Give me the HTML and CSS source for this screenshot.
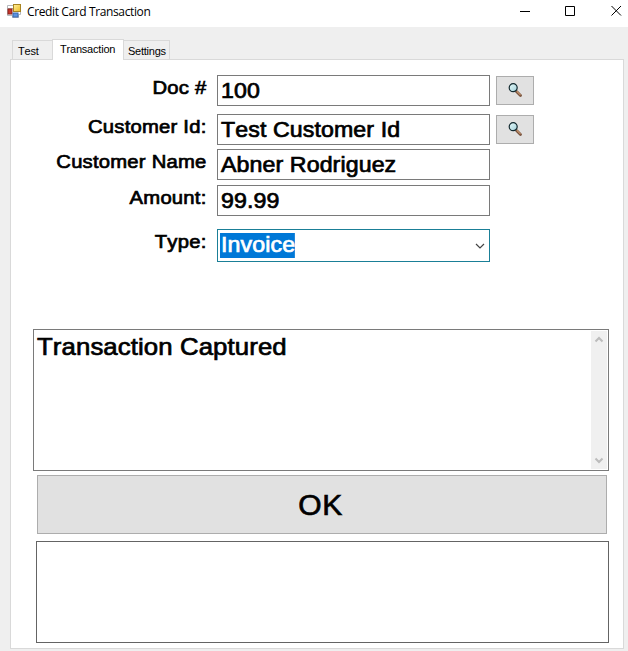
FILE: index.html
```html
<!DOCTYPE html>
<html lang="en">
<head>
<meta charset="utf-8">
<title>Credit Card Transaction</title>
<link rel="stylesheet" href="styles.css">
</head>
<body>
<svg width="0" height="0" class="defs">
  <defs>
    <linearGradient id="lens" x1="0" y1="0" x2="1" y2="1"><stop offset="0" stop-color="#e4fafa"/><stop offset="1" stop-color="#a3d0da"/></linearGradient>
    <linearGradient id="gold" x1="0" y1="0" x2="1" y2="1"><stop offset="0" stop-color="#fff0a0"/><stop offset="1" stop-color="#eebc20"/></linearGradient>
    <symbol id="magnifier" viewBox="0 0 16 16">
      <path d="M9.500 9.500l4 4" stroke="#76503a" stroke-width="2.800" stroke-linecap="round"/>
      <path d="M9.800 9.300l3.800 3.800" stroke="#c1906c" stroke-width="1.300"/>
      <circle cx="6.200" cy="5.700" r="4" fill="url(#lens)" stroke="#132a30" stroke-width="1.200"/>
    </symbol>
  </defs>
</svg>
<div class="window">
  <header class="titlebar">
    <svg class="app-icon" width="15" height="15" viewBox="0 0 15 15">
      <path d="M.5 1.500h6v3h-6zM.5 4.500v7h5v2h6v-3h2v-3" fill="#fff" stroke="#b5b9bd"/>
      <rect x="6.500" y=".5" width="7" height="7" fill="url(#gold)" stroke="#a88422"/>
      <rect x="1" y="5" width="4" height="5" fill="#c8352b" stroke="#8d241d"/>
      <rect x="6" y="9" width="5" height="4" fill="#5b93e0" stroke="#3d68ac"/>
    </svg>
    <h1 class="title">Credit Card Transaction</h1>
    <svg class="controls" width="102" height="12" viewBox="0 0 102 12" fill="none" stroke="#000">
      <path d="M0 6.500h10M45.500 1.500h9v9h-9zM91.500 1l9.500 9.500M101 1l-9.500 9.500"/>
    </svg>
  </header>
  <main class="client">
    <nav class="tabs">
      <span class="tab tab-test">Test</span>
      <span class="tab tab-active">Transaction</span>
      <span class="tab tab-settings">Settings</span>
    </nav>
    <section class="panel">
      <div class="form">
        <div class="row row-doc"><span class="label">Doc #</span><div class="field"><span class="value">100</span></div><div class="search"><svg width="16" height="16"><use href="#magnifier"/></svg></div></div>
        <div class="row row-id"><span class="label">Customer Id:</span><div class="field"><span class="value">Test Customer Id</span></div><div class="search"><svg width="16" height="16"><use href="#magnifier"/></svg></div></div>
        <div class="row row-name"><span class="label">Customer Name</span><div class="field"><span class="value">Abner Rodriguez</span></div></div>
        <div class="row row-amount"><span class="label">Amount:</span><div class="field"><span class="value">99.99</span></div></div>
        <div class="row row-type"><span class="label">Type:</span><div class="field combo"><span class="value selected">Invoice</span><svg width="10" height="6" viewBox="0 0 10 6" fill="none" stroke="#444" stroke-width="1.200"><path d="M1 1l4 4 4-4"/></svg></div></div>
      </div>
      <div class="log">
        <span class="message">Transaction Captured</span>
        <div class="scrollbar">
          <svg width="10" height="7" viewBox="0 0 10 7" fill="none" stroke="#bcbcbc" stroke-width="2"><path d="M1.500 5.500L5 2l3.500 3.500"/></svg>
          <svg width="10" height="7" viewBox="0 0 10 7" fill="none" stroke="#bcbcbc" stroke-width="2"><path d="M1.500 1.500L5 5l3.500-3.500"/></svg>
        </div>
      </div>
      <div class="ok">OK</div>
      <div class="output"></div>
    </section>
  </main>
</div>
</body>
</html>
```

FILE: styles.css
```css
* { box-sizing: border-box; }

body {
  margin: 0;
  color: #000;
  font-family: "Liberation Sans", Arial, sans-serif;
  font-kerning: none;
}

.defs { position: absolute; }

.window {
  width: 628px;
  height: 651px;
  display: flex;
  flex-direction: column;
  overflow: hidden;
  background: #efefef;
}

.titlebar {
  height: 27px;
  flex: none;
  display: flex;
  align-items: flex-start;
  padding: 4px 6px 0 7px;
  background: #fff;
}

.title {
  margin: 0 0 0 5px;
  font-family: "Open Sans", "Noto Sans", sans-serif;
  font-weight: 400;
  font-size: 12px;
  line-height: 16px;
  letter-spacing: -0.38px;
  white-space: nowrap;
}

.controls { margin: 1px 0 0 auto; }

.client {
  flex: 1;
  padding: 12px 4px 2px 10px;
  display: flex;
  flex-direction: column;
}

.tabs {
  height: 20px;
  flex: none;
  display: flex;
  align-items: flex-end;
  padding-left: 2px;
}

.tab {
  height: 19px;
  border: 1px solid #d9d9d9;
  border-bottom: 0;
  font-size: 11px;
  line-height: 20px;
  letter-spacing: -0.2px;
  padding-left: 5px;
  white-space: nowrap;
}

.tab-test { width: 40px; border-right: 0; }

.tab-active {
  width: 72px;
  height: 21px;
  margin-bottom: -1px;
  padding-left: 7px;
  background: #fff;
  line-height: 19px;
  z-index: 1;
}

.tab-settings { width: 46px; border-left: 0; padding-left: 4px; letter-spacing: -0.25px; }

.panel {
  height: 590px;
  padding: 15px 14px 0 22px;
  border: 1px solid #d9d9d9;
  background: #fff;
}

.form { height: 254px; }

.row {
  display: grid;
  grid-template-columns: 173.5px 273px 38px;
  align-items: start;
}

.row-doc { margin-bottom: 8px; }
.row-id { margin-bottom: 4px; }
.row-name { margin-bottom: 5px; }
.row-amount { margin-bottom: 13px; }

.label, .value, .message, .ok { -webkit-text-stroke: 0.7px #000; }

.label {
  text-align: right;
  font-size: 18.67px;
  line-height: 25px;
  letter-spacing: 0.2px;
  white-space: nowrap;
  transform: scaleX(1.085);
  transform-origin: right;
}

.field {
  height: 31px;
  margin-left: 10.5px;
  width: 273px;
  border: 1px solid #7a7a7a;
  padding-left: 3px;
  font-size: 21.33px;
  line-height: 30px;
  white-space: nowrap;
}

.value {
  display: inline-block;
  letter-spacing: 0.1px;
  transform: scaleX(1.085);
  transform-origin: left;
}

.combo {
  height: 33px;
  display: flex;
  align-items: center;
  justify-content: space-between;
  border-color: #1a7f97;
  padding: 0 4px 0 2px;
}

.selected {
  height: 25px;
  padding-left: 1px;
  background: #0078d7;
  color: #fff;
  line-height: 25px;
  -webkit-text-stroke-color: #fff;
}

.search {
  width: 38px;
  height: 29px;
  margin: 1px 0 0 16.5px;
  padding-bottom: 2px;
  display: flex;
  align-items: center;
  justify-content: center;
  border: 1px solid #adadad;
  background: #e1e1e1;
}

.log {
  width: 576px;
  height: 142px;
  padding: 1px 1px 1px 3px;
  display: flex;
  justify-content: space-between;
  border: 1px solid #7a7a7a;
}

.message {
  font-size: 24px;
  line-height: 32px;
  letter-spacing: 0.1px;
  height: 32px;
  transform: scaleX(1.073);
  transform-origin: left;
}

.scrollbar {
  width: 16px;
  padding: 5px 0;
  display: flex;
  flex-direction: column;
  align-items: center;
  justify-content: space-between;
  background: #f0f0f0;
}

.ok {
  width: 570px;
  height: 59px;
  margin: 4px 0 7px 4px;
  padding-right: 3px;
  border: 1px solid #adadad;
  background: #e1e1e1;
  text-align: center;
  font-size: 30px;
  line-height: 57px;
  letter-spacing: 0.6px;
}

.output {
  width: 573px;
  height: 102px;
  margin-left: 3px;
  border: 1px solid #646464;
}
```
